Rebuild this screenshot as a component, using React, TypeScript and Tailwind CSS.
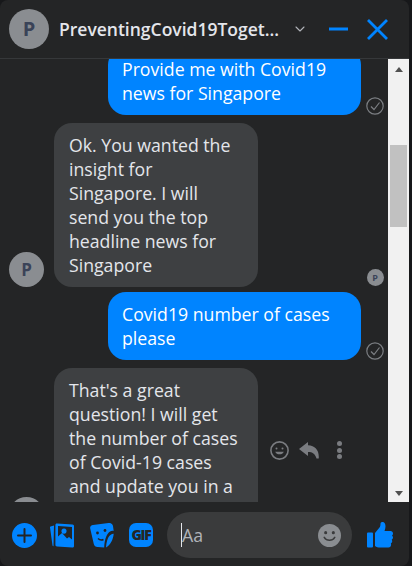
import { ChevronDown } from 'lucide-react';

function Avatar({ big }: { big?: boolean }) {
    return (
        <div
            className={
                big
                    ? 'flex h-[35px] w-[35px] shrink-0 items-center justify-center rounded-full bg-[#8a8d91] text-[17px] font-bold text-[#3a4358]'
                    : 'flex h-[17px] w-[17px] shrink-0 items-center justify-center rounded-full bg-[#8a8d91] text-[9px] font-bold text-[#3a4358]'
            }
        >
            P
        </div>
    );
}

function SentCheck() {
    return (
        <svg width="18" height="18" viewBox="0 0 18 18" fill="none" stroke="#7b7e82" strokeWidth="1.2">
            <circle cx="9" cy="9" r="8.2" />
            <path d="M5 9.5l3 3 5.5-7" />
        </svg>
    );
}

function Sent({ lines, className }: { lines: string[]; className?: string }) {
    return (
        <div className={`flex items-end justify-end ${className ?? ''}`}>
            <div className="w-[253px] rounded-[18px] bg-[#0084ff] py-[10px] pl-[14px] pr-[15px] text-white">
                {lines.map((l) => (
                    <div key={l}>{l}</div>
                ))}
            </div>
            <div className="ml-[5px] mr-[4px] flex w-[18px] justify-center">
                <SentCheck />
            </div>
        </div>
    );
}

function Received({ lines, className, seen, actions }: { lines: string[]; className?: string; seen?: boolean; actions?: boolean }) {
    return (
        <div className={`flex items-end pl-[9px] ${className ?? ''}`}>
            <Avatar big />
            <div className="ml-[10px] w-[204px] shrink-0 rounded-[18px] bg-[#3e4042] px-[15px] py-[10px] text-[#e4e6eb]">
                {lines.map((l) => (
                    <div key={l}>{l}</div>
                ))}
            </div>
            {actions && (
                <div className="ml-[12px] flex items-center gap-[10px] self-center text-[#7a7c80]">
                    <svg width="19" height="19" viewBox="0 0 19 19" fill="none" stroke="currentColor" strokeWidth="1.6">
                        <circle cx="9.5" cy="9.5" r="8.6" />
                        <circle cx="6.5" cy="7.5" r="1" fill="currentColor" stroke="none" />
                        <circle cx="12.5" cy="7.5" r="1" fill="currentColor" stroke="none" />
                        <path d="M5.2 10.8c1 3.4 7.6 3.4 8.6 0z" fill="currentColor" stroke="none" />
                    </svg>
                    <svg width="20" height="17" viewBox="0 0 20 17" fill="currentColor">
                        <path d="M9 0L0 7l9 7V10c4.500 0 7 1.500 8.500 6.500h2.200C20.500 9 16.500 3.500 9 3.300z" />
                    </svg>
                    <div className="ml-[8px] flex flex-col gap-[1.5px]">
                        <div className="h-[5px] w-[5px] rounded-full bg-current" />
                        <div className="h-[5px] w-[5px] rounded-full bg-current" />
                        <div className="h-[5px] w-[5px] rounded-full bg-current" />
                    </div>
                </div>
            )}
            {seen && (
                <div className="ml-auto mb-[1px] mr-[4px] flex w-[18px] justify-center">
                    <Avatar />
                </div>
            )}
        </div>
    );
}

function ToolIcons() {
    return (
        <div className="flex items-center text-[#0084ff]">
            <svg className="ml-[12px]" width="25" height="25" viewBox="0 0 25 25">
                <circle cx="12.5" cy="12.5" r="12.5" fill="#0084ff" />
                <path d="M12.5 6v13M6 12.5h13" stroke="#242526" strokeWidth="2" strokeLinecap="round" />
            </svg>
            <svg className="ml-[13px]" width="25" height="25" viewBox="0 0 25 25" fill="currentColor">
                <path d="M4 2.500L0.500 3.500c-.5.200-.6.500-.5 1l2.500 18c.1.500.5.800 1 .8z" />
                <path
                    fillRule="evenodd"
                    d="M7 .5l15.500 1c1 .1 1.500.7 1.500 1.700V23c0 1-.6 1.600-1.600 1.500L7 23.500c-1-.1-1.600-.7-1.600-1.700V2c0-1 .6-1.600 1.600-1.500zM8 3v10.500l4-3.500 5 5.500 2-1.500 3 2.500V4zM14 5.500a2.600 2.600 0 1 0 .01 0z"
                />
            </svg>
            <svg className="ml-[15px]" width="24" height="25" viewBox="0 0 24 25" fill="currentColor">
                <path d="M3 2L18.500 0c2.500-.2 4 1 4.500 3l.7 5c-2.200-.5-4.200.5-5.700 2.500-2 2.500-3.500 7-3.800 14l-6.500-.5C5.500 24 4.300 23 3.800 21L.2 5.500C-.2 3.700 1 2.300 3 2z" />
                <path d="M16 24.500c.3-5.500 1.700-9.500 3.300-11.500 1.200-1.500 2.800-2.500 4.400-2.300-.5 6-3.500 11.500-7.700 13.800z" />
                <circle cx="7.500" cy="10" r="1.400" fill="#242526" />
                <circle cx="15" cy="7.500" r="1.400" fill="#242526" />
                <path d="M8 15.500c1.500 1.500 3.500 2 5.500 1" fill="none" stroke="#242526" strokeWidth="1.500" />
            </svg>
            <div className="ml-[15px] flex h-[24px] w-[24px] items-center justify-center rounded-[7px] bg-[#0084ff] text-[14px] font-extrabold tracking-[-1.2px] text-[#242526]">
                GIF
            </div>
        </div>
    );
}

export default function App() {
    return (
        <div className="h-[566px] w-[412px] bg-[#17181a]">
            <div
                className="flex h-[566px] w-[409px] flex-col overflow-hidden rounded-[8px] bg-[#242526] text-[17.7px] leading-[24px]"
                style={{ fontFamily: '"Open Sans", sans-serif' }}
            >
                <div className="flex h-[59px] shrink-0 items-center border-b border-[#36383a] pl-[9px]">
                    <div className="flex h-[40px] w-[40px] shrink-0 items-center justify-center rounded-full bg-[#8a8d91] text-[20px] font-bold text-[#3a4358]">
                        P
                    </div>
                    <div className="ml-[10px] whitespace-nowrap text-[17.5px] font-semibold text-[#e4e6eb]">PreventingCovid19Toget...</div>
                    <ChevronDown className="ml-[13px] shrink-0 text-[#b0b3b8]" size={16} strokeWidth={1.6} />
                    <svg className="ml-[21px] shrink-0" width="19" height="4" viewBox="0 0 19 4">
                        <path d="M0 2h19" stroke="#0084ff" strokeWidth="3" />
                    </svg>
                    <svg className="ml-[19px] shrink-0" width="21" height="21" viewBox="0 0 21 21">
                        <path d="M1 1l19 19M20 1L1 20" stroke="#0084ff" strokeWidth="2.800" />
                    </svg>
                </div>
                <div className="flex min-h-0 flex-1">
                    <div className="min-w-0 flex-1 overflow-hidden">
                        <Sent className="-mt-[12px]" lines={['Provide me with Covid19', 'news for Singapore']} />
                        <Received
                            className="mt-[8px]"
                            seen
                            lines={['Ok. You wanted the', 'insight for', 'Singapore. I will', 'send you the top', 'headline news for', 'Singapore']}
                        />
                        <Sent className="mt-[5px]" lines={['Covid19 number of cases', 'please']} />
                        <Received
                            className="mt-[8px]"
                            actions
                            lines={["That's a great", 'question! I will get', 'the number of cases', 'of Covid-19 cases', 'and update you in a', 'moment']}
                        />
                    </div>
                    <div className="flex w-[21px] shrink-0 flex-col items-center bg-[#f1f1f1]">
                        <div className="mt-[8px] h-0 w-0 border-x-[4px] border-b-[5px] border-x-transparent border-b-[#505050]" />
                        <div className="mt-[73px] h-[82px] w-[17px] bg-[#c1c1c1]" />
                        <div className="mt-auto mb-[6px] h-0 w-0 border-x-[4px] border-t-[5px] border-x-transparent border-t-[#505050]" />
                    </div>
                </div>
                <div className="flex h-[64px] shrink-0 items-center pt-[2px]">
                    <ToolIcons />
                    <div className="ml-[14px] flex h-[46px] w-[185px] items-center rounded-[23px] bg-[#3a3b3c] pl-[14px] pr-[11px] text-[#b0b3b8]">
                        <div className="h-[24px] w-px bg-[#e4e6eb]" />
                        <span>Aa</span>
                        <svg className="ml-auto" width="23" height="23" viewBox="0 0 24 24">
                            <circle cx="12" cy="12" r="12" fill="#8a8d91" />
                            <circle cx="8" cy="9" r="1.600" fill="#3a3b3c" />
                            <circle cx="16" cy="9" r="1.600" fill="#3a3b3c" />
                            <path d="M6.500 14c2.500 4 8.500 4 11 0" fill="none" stroke="#3a3b3c" strokeWidth="1.600" strokeLinecap="round" />
                        </svg>
                    </div>
                    <svg className="ml-[15px]" width="26" height="26" viewBox="0 0 26 26" fill="#0084ff">
                        <path d="M0 11.500a1 1 0 0 1 1-1h4a1 1 0 0 1 1 1v13a1 1 0 0 1-1 1H1a1 1 0 0 1-1-1z" />
                        <path d="M8 11l4.500-5.500c.8-1 1-2.500 1-4C13.500.5 14.500 0 15.500 0c2 0 3 2 3 4.500 0 1.500-.5 3-1 4.500h6c1.500 0 2.500 1 2.500 2.500 0 1-.5 1.600-1 2 .6.500 1 1.200 1 2 0 1-.6 1.800-1.300 2.200.3.400.5 1 .5 1.600 0 1-.6 1.800-1.400 2.200.2.400.3.800.3 1.200 0 1.500-1.100 2.800-2.600 2.800H13c-2 0-3.500-.5-5-1.500z" />
                    </svg>
                </div>
            </div>
        </div>
    );
}
